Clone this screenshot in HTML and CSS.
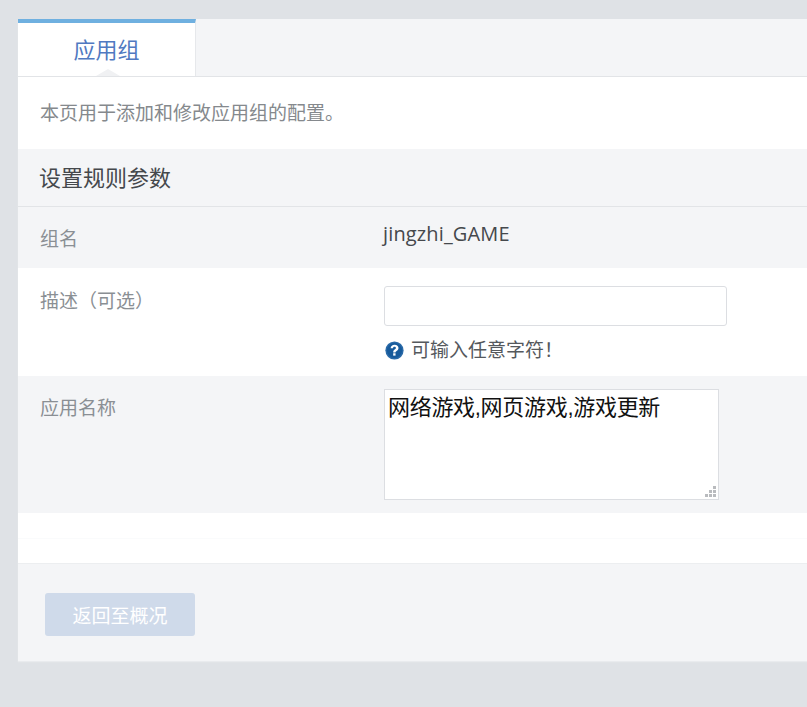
FILE: index.html
```
<!DOCTYPE html>
<html lang="zh-CN">
<head>
<meta charset="utf-8">
<title>应用组</title>
<link rel="stylesheet" href="styles.css">
</head>
<body>
<main class="card">
  <nav class="tabs"><div class="tab">应用组</div></nav>
  <p class="intro">本页用于添加和修改应用组的配置。</p>
  <h2 class="section">设置规则参数</h2>
  <div class="row row-name">
    <div class="label">组名</div>
    <div class="value">jingzhi_GAME</div>
  </div>
  <div class="row row-desc">
    <div class="label">描述（可选）</div>
    <div class="field">
      <input class="input" type="text">
      <div class="hint">
        <svg class="hint-icon" viewBox="0 0 20 20" width="19" height="19" aria-hidden="true">
          <circle cx="10" cy="10" r="9.6" fill="#2a6aa8"/>
          <circle cx="10" cy="10" r="8" fill="#175a9b"/>
          <path d="M5.9 7.6C6.1 5.2 7.8 3.9 10.1 3.9c2.5 0 4.1 1.4 4.1 3.4 0 1.6-.9 2.4-2 3.1-.9.6-1.1.9-1.1 1.7H8.6c0-1.6.5-2.4 1.6-3.1.9-.6 1.3-1 1.3-1.6 0-.8-.6-1.3-1.5-1.3-1 0-1.5.6-1.6 1.5z" fill="#fff"/>
          <rect x="8.6" y="12.9" width="2.5" height="2.5" fill="#fff"/>
        </svg>
        <span>可输入任意字符！</span>
      </div>
    </div>
  </div>
  <div class="row row-app">
    <div class="label">应用名称</div>
    <div class="textarea-wrap">
      <textarea class="textarea">网络游戏,网页游戏,游戏更新</textarea>
      <svg class="grip" viewBox="0 0 11 11" width="11" height="11" aria-hidden="true">
        <path d="M8 0h3v3H8zM4 4h3v3H4zM8 4h3v3H8zM0 8h3v3H0zM4 8h3v3H4zM8 8h3v3H8z" fill="#b9bbbe"/>
      </svg>
    </div>
  </div>
  <div class="spacer"></div>
  <footer class="footer"><button class="btn" type="button" disabled>返回至概况</button></footer>
</main>
</body>
</html>
```
FILE: styles.css
```
* { box-sizing: border-box; }
html, body { margin: 0; height: 707px; overflow: hidden; }
body {
  background: #dfe2e6;
  padding: 19px 0 0 18px;
  font-family: "Open Sans", "Noto Sans CJK SC", sans-serif;
  color: #8a8f94;
}
.card { background: #fff; box-shadow: 0 1px 1px #e9ebee; }
.tabs {
  height: 58px;
  background: #f4f5f7;
  border-bottom: 1px solid #e2e4e7;
  display: flex;
}
.tab {
  position: relative;
  width: 178px;
  height: 57px;
  background: #fff;
  border-top: 4px solid #6fb0e0;
  border-right: 1px solid #e6e8eb;
  color: #5079c1;
  font-size: 22px;
  line-height: 53px;
  text-align: center;
}
.tab::after {
  content: "";
  position: absolute;
  left: 78px;
  bottom: 0;
  width: 24px;
  height: 7px;
  background: #f0f1f3;
  clip-path: polygon(50% 0, 100% 100%, 0 100%);
}
.intro {
  margin: 0;
  height: 72px;
  padding: 0 22px;
  font-size: 19px;
  line-height: 72px;
  color: #85898d;
}
.section {
  margin: 0;
  height: 58px;
  padding: 0 21px;
  background: #f4f5f7;
  border-bottom: 1px solid #e2e4e7;
  font-size: 22px;
  font-weight: 400;
  line-height: 57px;
  color: #45484c;
}
.row { display: flex; padding-left: 22px; }
.label { width: 344px; flex: none; font-size: 19px; }
.row-name { height: 61px; background: #f4f5f7; padding-top: 18px; line-height: 28px; }
.value { font-size: 20px; letter-spacing: 0.15px; color: #45484c; line-height: 20px; margin-left: -1px; margin-top: -1px; }
.row-desc { height: 108px; background: #fff; padding-top: 18px; }
.row-desc .label { line-height: 30px; }
.input {
  display: block;
  width: 343px;
  height: 40px;
  border: 1px solid #dcdee2;
  border-radius: 3px;
  background: #fff;
}
.hint {
  display: flex;
  align-items: center;
  gap: 8px;
  margin-top: 12px;
  font-size: 19px;
  line-height: 24px;
  color: #55595d;
}
.hint-icon { margin-left: 1px; margin-right: -1px; }
.row-app { height: 137px; background: #f4f5f7; padding-top: 13px; }
.row-app .label { line-height: 38px; }
.textarea-wrap { position: relative; width: 335px; height: 111px; }
.textarea {
  display: block;
  width: 335px;
  height: 111px;
  padding: 2px 3px;
  border: 1px solid #dcdee2;
  border-radius: 0;
  background: #fff;
  font-family: "Liberation Sans", "Noto Sans CJK SC", sans-serif;
  font-size: 22px;
  letter-spacing: -0.3px;
  line-height: 32px;
  color: #111;
  outline: none;
  resize: none;
}
.grip { position: absolute; right: 3px; bottom: 3px; }
.spacer { height: 50px; background: linear-gradient(#fff 25px, #fafbfc 25px, #fafbfc 26px, #fff 26px); }
.footer {
  height: 98px;
  padding: 29px 27px;
  background: #f4f5f7;
  border-top: 1px solid #eceef0;
}
.btn {
  display: block;
  width: 150px;
  height: 43px;
  border: 0;
  border-radius: 3px;
  background: #cfdaea;
  color: #fff;
  font-family: "Open Sans", "Noto Sans CJK SC", sans-serif;
  font-size: 19px;
  padding: 0;
}
```
